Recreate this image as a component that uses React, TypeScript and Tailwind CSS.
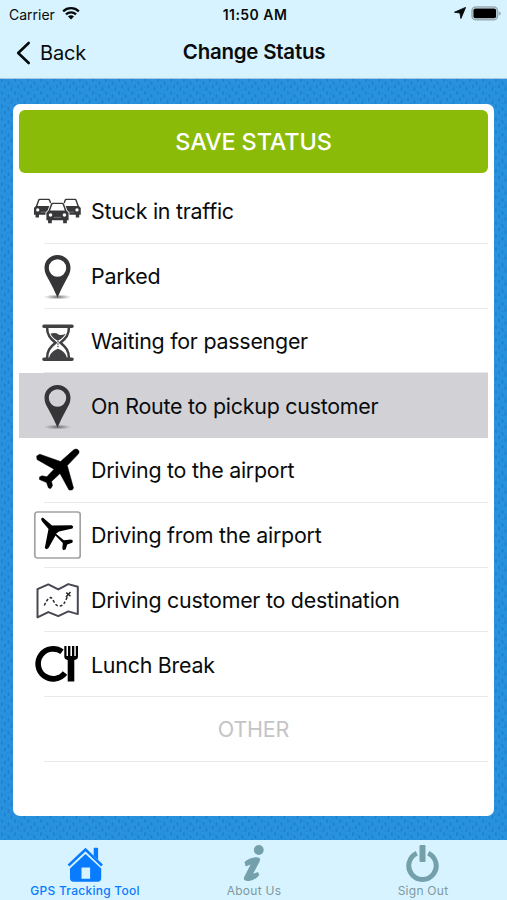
import type { ReactNode } from 'react';

function CarShape({ x, y, s }: { x: number; y: number; s: number }) {
  return (
    <g transform={`translate(${x} ${y}) scale(${s})`}>
      <path d="M2.500 8.500 5 1.500Q5.500.3 6.800.3h10.400q1.300 0 1.800 1.200l2.500 7 2.300 2.500v8H22V22h-4v-3H6v3H2v-3H.2v-8Z" fill="#38383a" stroke="#fff" strokeWidth="1.800" paintOrder="stroke" />
      <path d="M4.200 8.600 6.400 2.400q.3-.8 1-.8h9.200q.7 0 1 .8l2.200 6.200Z" fill="#fff" />
      <circle cx="4.600" cy="13.300" r="1.900" fill="#fff" />
      <circle cx="19.400" cy="13.300" r="1.900" fill="#fff" />
      <path d="M8 15.800h8" stroke="#8d8d8f" strokeWidth="0.800" />
    </g>
  );
}

function TrafficIcon() {
  return (
    <svg width="48" height="48" viewBox="0 0 48 48" className="block">
      <CarShape x={0.8} y={11.500} s={0.86} />
      <CarShape x={27.300} y={11.500} s={0.86} />
      <CarShape x={13.200} y={15.500} s={0.94} />
    </svg>
  );
}

function PinIcon() {
  return (
    <svg width="48" height="48" viewBox="0 0 48 48" className="block">
      <defs>
        <radialGradient id="pinShadow">
          <stop offset="0" stopColor="#444" stopOpacity="0.8" />
          <stop offset="1" stopColor="#777" stopOpacity="0" />
        </radialGradient>
      </defs>
      <ellipse cx="24.500" cy="45" rx="14" ry="2.600" fill="url(#pinShadow)" />
      <path transform="translate(.5 0)" fillRule="evenodd" d="M24 3C16.600 3 11 8.500 11 15.800c0 5 2 8 4.500 12.500C19 34.500 21 39 24 45.500c3-6.500 5-11 8.500-17.200C35 23.800 37 20.800 37 15.800 37 8.500 31.400 3 24 3Zm0 4.300a8.700 8.700 0 1 1 0 17.400 8.700 8.700 0 0 1 0-17.400Z" fill="#353537" />
    </svg>
  );
}

function HourglassIcon() {
  return (
    <svg width="48" height="48" viewBox="0 0 48 48" className="block">
      <g transform="translate(.5 1.700)">
        <path d="M10.500 7.500h28M10.500 40.500h28" stroke="#414143" strokeWidth="3.600" strokeLinecap="round" />
        <path d="M13.500 8c0 8 3 11.500 8.500 16-5.500 4.500-8.500 8-8.500 16M35.500 8c0 8-3 11.500-8.500 16 5.500 4.500 8.500 8 8.500 16" fill="none" stroke="#414143" strokeWidth="2.500" />
        <path d="M17 15q5-1.500 8 .8 3 1.400 7-.8-1.800 4-7.500 7Q19 19.500 17 15ZM15.500 40c.5-5 4.500-8.500 9-10 4.500 1.500 8.500 5 9 10Z" fill="#414143" />
        <path d="M24.500 22v7" stroke="#414143" strokeWidth="1.200" strokeDasharray="1.500 1" />
      </g>
    </svg>
  );
}

function PlaneIcon() {
  return (
    <svg width="48" height="48" viewBox="0 0 48 48" className="block">
      <path d="M45.300 4c1.200 1.300 1 3-.3 4.300L34.300 19.500 40.500 42l-1.300 2H36L27 27.500l-8.500 8 1 4-1.700 3-2.300-.5-2-5.500-7-3V31l2.500-1.200 4.800 1L21 23.200 4 13.500 3.700 10l3.100-1.800 20.700 7.300L40.500 4c1.500-1.200 3.500-1.200 4.800 0Z" fill="#000" stroke="#000" strokeWidth=".5" />
    </svg>
  );
}

function ArrivalIcon() {
  return (
    <svg width="48" height="48" viewBox="0 0 48 48" className="block">
      <rect x="1.800" y="1" width="45.400" height="46" rx="2.500" fill="#fff" stroke="#a2a2a2" strokeWidth="1.700" />
      <path d="M8.700 7c1-.5 1.900.1 2.800.9L19 14.500l19.700-.3 1.500 1.400-.7 1.800L26 20.500l-3 2.200 7.800 6.500 7.200-.8 2 1.300-.8 2-5 1.800-1.500 4.800-2.200 1-1.200-1.600.5-5.700-7.300-7.500L15.500 37l-1.900 1.200-1.800-1.300L15.500 18 9.200 10.500C8.300 9.300 7.800 7.900 8.700 7Z" fill="#000" />
    </svg>
  );
}

function MapIcon() {
  return (
    <svg width="48" height="48" viewBox="0 0 48 48" className="block">
      <path d="m4.500 13.100 10.800-4.700 10 5 10-5.300 9.500 2.700v27.300l-9.500-2.700-10 4.700-10-4-10.800 5.200Z" fill="none" stroke="#484853" strokeWidth="2" strokeLinejoin="round" />
      <path d="M11.300 29.500c1.700-3.500 3.500-7.500 6.200-8 2.500 0 4 8.500 8.300 8.500 5 0 6-4 8.500-9" fill="none" stroke="#29292d" strokeWidth="1.500" strokeDasharray="2.800 1.900" />
      <path d="m33.300 16.600 4.200 3.600m0-4.300-4.500 5" stroke="#29292d" strokeWidth="1.500" />
    </svg>
  );
}

function LunchIcon() {
  return (
    <svg width="48" height="48" viewBox="0 0 48 48" className="block">
      <path d="M29 10.800a15 15 0 1 0 3 21.200" fill="none" stroke="#000" strokeWidth="5.600" />
      <path d="M31.300 5v10.500q0 3 3.400 3.500v21.400h6.600V19q3.700-.5 3.700-3.500V5h-2.200v10h-1.500V5H39v10h-1.600V5H35v10h-1.500V5Z" fill="#000" />
    </svg>
  );
}

type Row = { label: string; icon: ReactNode; selected?: boolean };

const rows: Row[] = [
  { label: 'Stuck in traffic', icon: <TrafficIcon /> },
  { label: 'Parked', icon: <PinIcon /> },
  { label: 'Waiting for passenger', icon: <HourglassIcon /> },
  { label: 'On Route to pickup customer', icon: <PinIcon />, selected: true },
  { label: 'Driving to the airport', icon: <PlaneIcon /> },
  { label: 'Driving from the airport', icon: <ArrivalIcon /> },
  { label: 'Driving customer to destination', icon: <MapIcon /> },
  { label: 'Lunch Break', icon: <LunchIcon /> },
];

function StatusRow({ label, icon, selected }: Row) {
  return (
    <button className={`relative flex h-[64.75px] w-full items-center pl-3.5 text-left ${selected ? 'bg-[#d1d1d6]' : ''}`}>
      <span className="w-12 shrink-0">{icon}</span>
      <span className="ml-[10px] text-[21.4px] tracking-[-0.240px] whitespace-nowrap">{label}</span>
      {!selected && <span className="absolute right-0 bottom-0 left-[25px] h-px bg-[#e9e9eb]" />}
    </button>
  );
}

function StatusBar() {
  return (
    <div className="grid h-7 grid-cols-3 items-center pr-1.5 pl-[9px] text-[14px]">
      <div className="flex items-center gap-[7px]">
        <span>Carrier</span>
        <svg width="18" height="14" viewBox="0 0 19 14" className="-mt-0.5">
          <path d="M1.200 5.300a12 12 0 0 1 16.600 0M4.200 8.500a7.600 7.600 0 0 1 10.600 0" fill="none" stroke="#06090b" strokeWidth="2.400" />
          <path d="M9.500 13.800 6.300 10.800a4.500 4.500 0 0 1 6.400 0Z" fill="#06090b" />
        </svg>
      </div>
      <span className="text-center text-[14px] font-semibold tracking-[0.450px]">11:50 AM</span>
      <div className="flex items-center justify-end gap-[5px] pb-0.5">
        <svg width="12" height="12" viewBox="0 0 12 12">
          <path d="M11.600.4 6.900 11.500 6 6 .5 5.200Z" fill="#06090b" stroke="#06090b" strokeWidth=".9" strokeLinejoin="round" />
        </svg>
        <svg width="30" height="15" viewBox="0 0 30 15">
          <rect x="1" y="1" width="25.500" height="12.800" rx="3.800" fill="none" stroke="#9aabb2" strokeWidth="1.600" />
          <rect x="2.400" y="2.600" width="22.700" height="9.700" rx="2" fill="#000" />
          <path d="M27.800 5.200v4.500q2-.7 2-2.250t-2-2.250Z" fill="#9aabb2" />
        </svg>
      </div>
    </div>
  );
}

function Weave() {
  return (
    <svg width="100%" height="100%" aria-hidden="true" className="block">
      <defs>
        <pattern id="weave" width="13" height="13" patternUnits="userSpaceOnUse">
          <rect width="13" height="13" fill="#2992df" />
          <path d="M2 1v2M8.500 4v2M5 7.500v2M11.500 10v2" stroke="#1f82d0" strokeWidth="1.900" strokeLinecap="round" />
          <path d="m4.500 2 2 1m4 4 2 1M0 8l2 1m5 3 2 .7" stroke="#268cda" strokeWidth="1.600" strokeLinecap="round" />
        </pattern>
      </defs>
      <rect width="100%" height="100%" fill="url(#weave)" />
    </svg>
  );
}

function HomeIcon() {
  return (
    <svg width="38" height="36" viewBox="0 0 38 36" className="block">
      <path d="M2.500 19.500 19.500 3.500l16.500 16" fill="none" stroke="#087bff" strokeWidth="2.500" />
      <path d="M27.700 2.500q0-.8.800-.8h2.800q.8 0 .8.800V14l-4.400-4.200Z" fill="#087bff" />
      <path fillRule="evenodd" d="M19.500 8 4 22.500V32q0 3.800 3.500 3.800h24.200q3.500 0 3.500-3.800v-9.500Zm-4 13.500h8.600v11.300h-8.600Z" fill="#087bff" />
    </svg>
  );
}

function InfoIcon() {
  return (
    <svg width="38" height="38" viewBox="0 0 38 38" className="block">
      <circle cx="23.800" cy="6" r="4.900" fill="#74a0ac" />
      <path d="M9.500 18q4-4 10-4.600c4.500-.4 6.500.6 5.200 3.800l-6.500 12.500 4.800-1.700 1.300 3q-4.300 5.300-10 6c-4.500.5-6.500-1-5-4.300l6.300-12.200-4.900 2Z" fill="#74a0ac" />
    </svg>
  );
}

function PowerIcon() {
  return (
    <svg width="36" height="38" viewBox="0 0 36 38" className="block">
      <path d="M11.800 9.300a13.700 13.700 0 1 0 11.400 0" fill="none" stroke="#74a0ac" strokeWidth="5" />
      <rect x="14.500" y="1" width="6" height="17" rx="1" fill="#74a0ac" />
    </svg>
  );
}

const tabs = [
  { label: 'GPS Tracking Tool', icon: <HomeIcon />, active: true },
  { label: 'About Us', icon: <InfoIcon />, active: false },
  { label: 'Sign Out', icon: <PowerIcon />, active: false },
];

export default function App() {
  return (
    <div className="relative isolate flex h-[900px] w-full max-w-[507px] flex-col overflow-hidden font-['Inter',sans-serif] text-[#090b0c]">
      <div className="absolute inset-0 -z-10"><Weave /></div>
      <header className="h-[79px] shrink-0 border-b border-[#a2c9dd] bg-[#d7f3ff]">
        <StatusBar />
        <div className="grid h-[49px] grid-cols-3 items-center">
          <button className="flex items-center pl-4 text-[20px] tracking-[-0.200px]">
            <svg width="15" height="24" viewBox="0 0 15 24" className="mr-[9px]">
              <path d="M12.700 2 2.200 12l10.500 10" fill="none" stroke="#06090b" strokeWidth="2.600" strokeLinecap="round" strokeLinejoin="round" />
            </svg>
            Back
          </button>
          <h1 className="pl-px text-center text-[20.500px] font-semibold tracking-[-0.240px] whitespace-nowrap">Change Status</h1>
        </div>
      </header>
      <main className="min-h-0 flex-1 px-[13px] pt-[25px] pb-6">
        <div className="h-full rounded-[7px] bg-white px-1.5 pt-1.5">
          <button className="h-[63px] w-full rounded-md bg-[#8abb08] text-[23.500px] font-medium tracking-[-0.150px] text-white">SAVE STATUS</button>
          <div className="mt-[6px]">
            {rows.map((row) => <StatusRow key={row.label} {...row} />)}
            <button className="relative h-[64.75px] w-full text-center text-[21.500px] tracking-[-0.200px] text-[#c4c4c6]">
              OTHER
              <span className="absolute right-0 bottom-0 left-[25px] h-px bg-[#e9e9eb]" />
            </button>
          </div>
        </div>
      </main>
      <nav className="grid h-[60px] shrink-0 grid-cols-3 bg-[#d7f3ff]">
        {tabs.map((tab) => (
          <button key={tab.label} className={`flex flex-col items-center ${tab.active ? 'font-medium text-[#087bff]' : 'text-[#7d999f]'}`}>
            <span className="flex h-[42px] items-end">{tab.icon}</span>
            <span className="mt-px pl-px text-[12px] leading-4 tracking-[0.260px] whitespace-nowrap">{tab.label}</span>
          </button>
        ))}
      </nav>
    </div>
  );
}
